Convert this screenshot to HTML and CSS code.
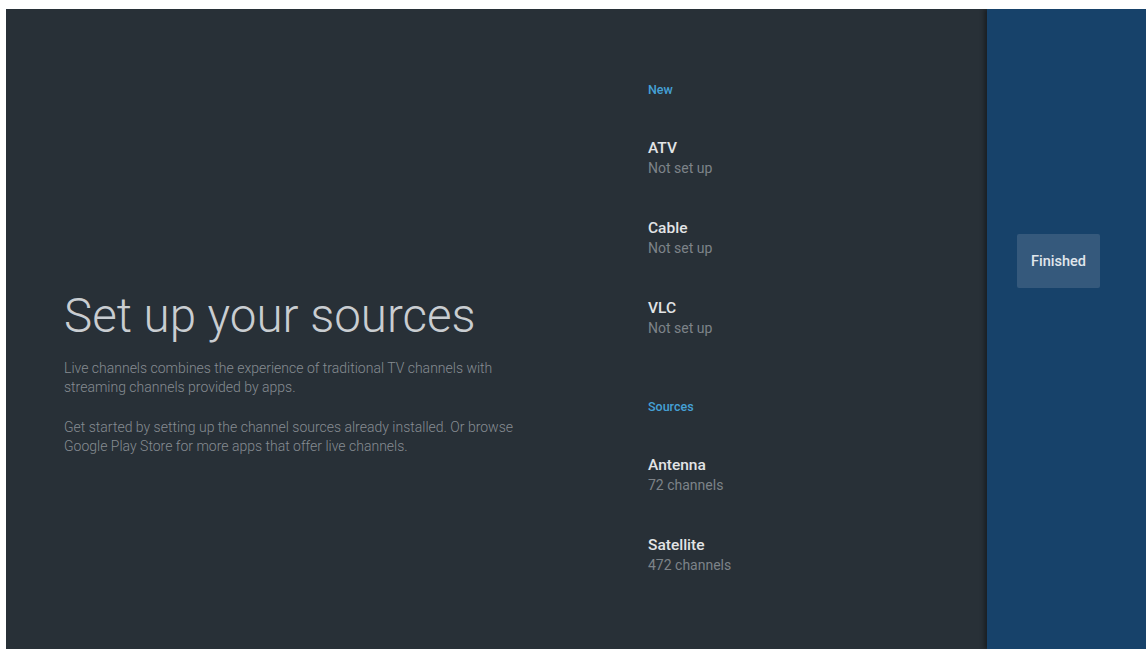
FILE: index.html
```html
<!DOCTYPE html>
<html lang="en">
<head>
    <meta charset="UTF-8">
    <title>Set up your sources</title>
    <link rel="stylesheet" href="styles.css">
</head>
<body>
    <div class="screen">
        <div class="intro">
            <h1>Set up your sources</h1>
            <p>Live channels combines the experience of traditional TV channels with streaming channels provided by apps.</p>
            <p>Get started by setting up the channel sources already installed. Or browse Google Play Store for more apps that offer live channels.</p>
        </div>

        <div class="list">
            <div class="section-label">New</div>
            <div class="item"><div class="item-title">ATV</div><div class="item-sub">Not set up</div></div>
            <div class="item"><div class="item-title">Cable</div><div class="item-sub">Not set up</div></div>
            <div class="item"><div class="item-title">VLC</div><div class="item-sub">Not set up</div></div>

            <div class="section-label section-gap">Sources</div>
            <div class="item"><div class="item-title">Antenna</div><div class="item-sub">72 channels</div></div>
            <div class="item"><div class="item-title">Satellite</div><div class="item-sub">472 channels</div></div>
        </div>

        <div class="actions">
            <button class="btn-finished">Finished</button>
        </div>
    </div>
</body>
</html>
```

FILE: styles.css
```css
body {
    margin: 0;
    background-color: #ffffff;
    font-family: Roboto, "Noto Sans", Arial, sans-serif;
}
.screen {
    display: flex;
    margin: 9px 2px 0 6px;
    height: 640px;
    background-color: #283037;
    overflow: hidden;
}
.intro {
    width: 642px;
    flex-shrink: 0;
    padding: 279px 0 0 58px;
    box-sizing: border-box;
}
h1 {
    margin: 0 0 15px;
    font-size: 47.5px;
    font-weight: 300;
    line-height: 56px;
    color: #c9cdd1;
}
.intro p {
    margin: 0 0 21px;
    font-size: 14px;
    font-weight: 300;
    line-height: 19px;
    color: #868c92;
    max-width: 480px;
}
.list {
    flex: 1;
    padding: 73px 0 0 0;
}
.section-label {
    font-size: 12.5px;
    font-weight: 500;
    line-height: 16px;
    color: #45a0d6;
    margin-bottom: 40px;
}
.section-gap {
    padding-top: 21px;
}
.item {
    height: 40px;
    margin-bottom: 40px;
}
.item-title {
    font-size: 15.5px;
    font-weight: 500;
    line-height: 20px;
    color: #e2e4e6;
}
.item-sub {
    font-size: 14px;
    line-height: 20px;
    color: #7d8389;
}
.actions {
    width: 159px;
    background-color: #17426a;
    box-shadow: -3px 0 4px rgba(0,0,0,0.35);
    padding: 225px 0 0 30px;
    box-sizing: border-box;
}
.btn-finished {
    width: 83px;
    height: 54px;
    border: none;
    border-radius: 2px;
    background-color: #35597c;
    color: #e0e6ec;
    font-family: Roboto, "Noto Sans", Arial, sans-serif;
    font-size: 14.5px;
    font-weight: 500;
    padding: 0;
}
```
